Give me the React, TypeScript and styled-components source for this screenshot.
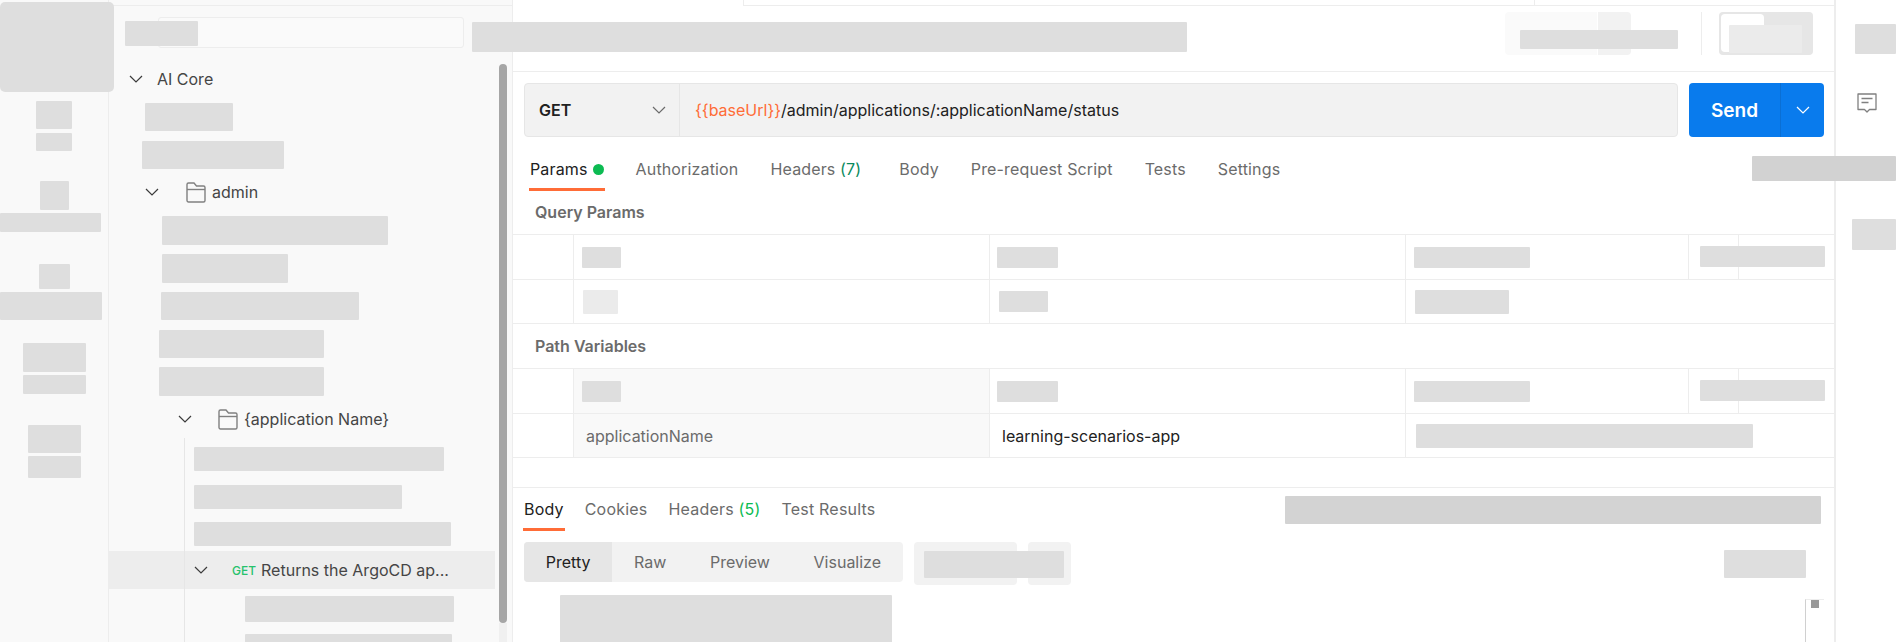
import React from 'react';
import styled, { createGlobalStyle } from 'styled-components';

const GlobalStyle = createGlobalStyle`
  html, body {
    margin: 0;
    padding: 0;
    background: #fff;
    overflow: hidden;
  }
  body {
    font-family: Inter, "Noto Sans", sans-serif;
  }
`;

const Shell = styled.div`
  position: relative;
  display: flex;
  width: 1896px;
  height: 642px;
  overflow: hidden;
  color: #454545;
`;

// covered-up bit of the screenshot
const Redact = styled.div<{ $w: number; $h: number; $c?: string; $mt?: number; $ml?: number; $mr?: number; $auto?: boolean; $start?: boolean }>`
  flex: none;
  width: ${(p) => p.$w}px;
  height: ${(p) => p.$h}px;
  margin-top: ${(p) => p.$mt ?? 0}px;
  margin-left: ${(p) => (p.$auto ? 'auto' : `${p.$ml ?? 0}px`)};
  margin-right: ${(p) => p.$mr ?? 0}px;
  align-self: ${(p) => (p.$start ? 'flex-start' : 'auto')};
  background: ${(p) => p.$c ?? '#dedede'};
  border-radius: 1px;
`;

const Overlay = styled(Redact)<{ $x: number; $y: number }>`
  position: absolute;
  z-index: 3;
  left: ${(p) => p.$x}px;
  top: ${(p) => p.$y}px;
  margin: 0;
`;

const NavRail = styled.nav`
  flex: none;
  width: 109px;
  height: 100%;
  box-sizing: border-box;
  background: #f9f9f9;
  border-right: 1px solid #ededed;
  display: flex;
  flex-direction: column;
  padding-top: 101px;
`;

const NavItem = styled.div<{ $gap: number; $mt: number }>`
  display: flex;
  flex-direction: column;
  align-items: center;
  gap: ${(p) => p.$gap}px;
  margin-top: ${(p) => p.$mt}px;
`;

const TopLeftBlock = styled(Overlay)`
  border-radius: 5px;
`;

const Sidebar = styled.aside`
  position: relative;
  flex: none;
  width: 404px;
  height: 100%;
  box-sizing: border-box;
  background: #f9f9f9;
  border-right: 1px solid #ededed;
`;

const SidebarTop = styled.div`
  height: 5px;
  border-bottom: 1px solid #ededed;
`;

const SearchRow = styled.div`
  display: flex;
  padding: 11px 0 0 49px;
`;

const SearchBox = styled.div`
  width: 306px;
  height: 31px;
  box-sizing: border-box;
  background: #fafafa;
  border: 1px solid #ededed;
  border-radius: 3px;
`;

const Tree = styled.div`
  position: relative;
  margin-top: 18px;
  display: flex;
  flex-direction: column;
`;

const TreeRow = styled.div<{ $pad: number; $mt: number; $h?: number; $active?: boolean }>`
  display: flex;
  align-items: center;
  flex: none;
  height: ${(p) => p.$h ?? 26}px;
  margin-top: ${(p) => p.$mt}px;
  margin-right: 17px;
  padding-left: ${(p) => p.$pad}px;
  background: ${(p) => (p.$active ? '#ededed' : 'transparent')};
  font-size: 16px;
  white-space: nowrap;
`;

const TreeLabel = styled.span<{ $ml: number }>`
  margin-left: ${(p) => p.$ml}px;
`;

const TreeIcon = styled.span<{ $ml: number }>`
  display: flex;
  margin-left: ${(p) => p.$ml}px;
`;

const MethodTag = styled.span`
  margin-left: 24px;
  margin-right: 5px;
  color: #27c26c;
  font-size: 12px;
  font-weight: 500;
`;

const GuideLine = styled.div`
  position: absolute;
  left: 75px;
  top: 372px;
  bottom: -200px;
  width: 1px;
  background: #e6e6e6;
`;

const ScrollThumb = styled.div`
  position: absolute;
  right: 5px;
  top: 64px;
  width: 8px;
  height: 559px;
  background: #a6a6a6;
  border-radius: 4px;
`;

const ScrollTrack = styled.div`
  position: absolute;
  right: 5px;
  top: 623px;
  width: 8px;
  height: 19px;
  background: #f0f0f0;
`;

const Main = styled.main`
  position: relative;
  flex: none;
  width: 1321px;
  height: 100%;
  background: #fff;
`;

const TabStrip = styled.div`
  display: flex;
  height: 5px;
  border-bottom: 1px solid #ededed;
`;

const OpenTab = styled.div`
  width: 230px;
  height: 6px;
  background: #fff;
  border-right: 1px solid #ededed;
`;

const ClosedTab = styled.div`
  width: 790px;
  border-right: 1px solid #ededed;
`;

const HeaderBar = styled.header`
  display: flex;
  align-items: center;
  height: 66px;
  padding: 0 21px 0 0;
  box-sizing: border-box;
  border-bottom: 1px solid #ededed;
`;

const SaveMain = styled.div`
  width: 92px;
  height: 43px;
  margin-left: auto;
  margin-top: -10px;
  background: #fafafa;
  border-radius: 4px 0 0 4px;
`;

const SaveCaret = styled.div`
  width: 33px;
  height: 43px;
  margin-left: 1px;
  margin-top: -10px;
  background: #f2f2f2;
  border-radius: 0 4px 4px 0;
`;

const HeaderDivider = styled.div`
  width: 1px;
  height: 43px;
  margin: -10px 17px 0 70px;
  background: #ededed;
`;

const ToggleTrack = styled.div`
  position: relative;
  width: 94px;
  height: 43px;
  margin-top: -10px;
  background: #e6e6e6;
  border-radius: 4px;
`;

const ToggleKnob = styled.div`
  position: absolute;
  left: 2px;
  top: 2px;
  width: 43px;
  height: 38px;
  background: #fff;
  border-radius: 4px;
`;

const UrlRow = styled.div`
  display: flex;
  gap: 11px;
  margin-top: 11px;
  padding: 0 10px 0 11px;
`;

const UrlBox = styled.div`
  display: flex;
  flex: 1;
  height: 54px;
  box-sizing: border-box;
  background: #f2f2f2;
  border: 1px solid #e6e6e6;
  border-radius: 4px;
  font-size: 16px;
`;

const MethodSelect = styled.div`
  display: flex;
  align-items: center;
  justify-content: space-between;
  width: 155px;
  padding: 0 13px 0 14px;
  box-sizing: border-box;
  border-right: 1px solid #e6e6e6;
  font-weight: 600;
  color: #212121;
  flex: none;
`;

const UrlInput = styled.div`
  display: flex;
  align-items: center;
  padding-left: 15px;
  color: #212121;
`;

const UrlVar = styled.span`
  color: #ff6c37;
`;

const SendButton = styled.div`
  display: flex;
  width: 135px;
  height: 54px;
  background: #097bed;
  border-radius: 4px;
  color: #fff;
  flex: none;
`;

const SendLabel = styled.div`
  display: flex;
  align-items: center;
  justify-content: center;
  width: 91px;
  font-size: 19px;
  font-weight: 600;
  border-right: 1px solid #0a6fd4;
`;

const SendCaret = styled.div`
  flex: 1;
  display: flex;
  align-items: center;
  justify-content: center;
`;

const TabRow = styled.div<{ $gap: number; $pad: number; $mt: number; $h: number; $track: number }>`
  position: relative;
  display: flex;
  gap: ${(p) => p.$gap}px;
  height: ${(p) => p.$h}px;
  margin-top: ${(p) => p.$mt}px;
  padding-left: ${(p) => p.$pad}px;
  box-sizing: border-box;
  font-size: 16px;
  letter-spacing: ${(p) => p.$track}px;
  color: #6b6b6b;
`;

const Tab = styled.div<{ $active?: boolean; $ml?: number }>`
  display: flex;
  align-items: center;
  gap: 5px;
  box-sizing: border-box;
  margin-left: ${(p) => p.$ml ?? 0}px;
  padding: 0 1px;
  white-space: nowrap;
  color: ${(p) => (p.$active ? '#212121' : '#6b6b6b')};
  border-bottom: 3px solid ${(p) => (p.$active ? '#ff6c37' : 'transparent')};
`;

const ResponseTab = styled(Tab)`
  padding-top: 2px;
`;

const Count = styled.span<{ $c: string }>`
  color: ${(p) => p.$c};
`;

const Dot = styled.span`
  width: 11px;
  height: 11px;
  border-radius: 50%;
  background: #0cbb52;
`;

const SectionTitle = styled.div<{ $h: number; $pb?: number }>`
  display: flex;
  align-items: center;
  height: ${(p) => p.$h}px;
  box-sizing: border-box;
  padding: 0 0 ${(p) => p.$pb ?? 0}px 22px;
  font-size: 16px;
  font-weight: 600;
  color: #6b6b6b;
`;

const ParamTable = styled.div`
  border-top: 1px solid #ededed;
`;

const ParamRow = styled.div<{ $h: number }>`
  display: grid;
  grid-template-columns: 60px 416px 416px 1fr;
  height: ${(p) => p.$h}px;
  box-sizing: border-box;
  border-bottom: 1px solid #ededed;
`;

const ParamCell = styled.div<{ $tint?: boolean }>`
  position: relative;
  display: flex;
  align-items: center;
  padding-left: 8px;
  border-left: 1px solid #ededed;
  background: ${(p) => (p.$tint ? '#f9f9f9' : 'transparent')};
  font-size: 16px;
  min-width: 0;
`;

const HandleCell = styled.div``;

const ColSplit = styled.div<{ $x: number }>`
  position: absolute;
  left: ${(p) => p.$x}px;
  top: 0;
  bottom: 0;
  width: 1px;
  background: #ededed;
`;

const KeyText = styled.span`
  margin-left: 4px;
  color: #6b6b6b;
`;

const ValueText = styled.span`
  margin-left: 4px;
  color: #212121;
`;

const Response = styled.section`
  margin-top: 29px;
  border-top: 1px solid #ededed;
`;

const ResponseBar = styled.div`
  display: flex;
  align-items: flex-start;
  height: 43px;
  margin-bottom: 11px;
`;

const ResponseTabs = styled(TabRow)`
  margin-top: 0;
  flex: none;
`;

const ViewBar = styled.div`
  display: flex;
  align-items: flex-start;
  gap: 11px;
  padding-left: 11px;
`;

const Segment = styled.div`
  display: flex;
  flex: none;
  width: 379px;
  height: 40px;
  background: #f2f2f2;
  border-radius: 4px;
  overflow: hidden;
  font-size: 16px;
  color: #6b6b6b;
`;

const SegmentItem = styled.div<{ $active?: boolean }>`
  display: flex;
  align-items: center;
  padding: 0 21.8px;
  background: ${(p) => (p.$active ? '#e6e6e6' : 'transparent')};
  color: ${(p) => (p.$active ? '#212121' : '#6b6b6b')};
`;

const ToolGroup = styled.div`
  position: relative;
  display: flex;
  gap: 11px;
`;

const ToolButton = styled.div<{ $w: number }>`
  width: ${(p) => p.$w}px;
  height: 43px;
  background: #f2f2f2;
  border-radius: 4px;
`;

const ToolCover = styled(Redact)`
  position: absolute;
  left: 10px;
  top: 9px;
  margin: 0;
`;

const BodyPreview = styled.div`
  margin: 10px 0 0 47px;
`;

const MiniTrack = styled.div`
  position: absolute;
  left: 1292px;
  top: 599px;
  width: 19px;
  height: 43px;
  box-sizing: border-box;
  border-left: 1px solid #d0d0d0;
  border-top: 1px solid #ededed;
`;

const MiniThumb = styled.div`
  width: 8px;
  height: 8px;
  margin-left: 5px;
  background: #999;
`;

const RightRail = styled.aside`
  flex: none;
  width: 61px;
  height: 100%;
  box-sizing: border-box;
  border-left: 2px solid #ededed;
  display: flex;
  flex-direction: column;
  align-items: flex-start;
  padding-top: 24px;
`;

const RailIcon = styled.div`
  margin: 39px 0 0 21px;
  height: 20px;
  line-height: 0;
`;

const Chevron = ({ size = 14, color = '#3b3b3b' }: { size?: number; color?: string }) => (
  <svg width={size} height={size} viewBox="0 0 14 14" fill="none" style={{ flex: 'none' }}>
    <path d="M1 4 L7 10 L13 4" stroke={color} strokeWidth="1.2" />
  </svg>
);

const FolderIcon = () => (
  <svg width="20" height="21" viewBox="0 0 20 21" fill="none" style={{ flex: 'none' }}>
    <path
      d="M1 18.5V2.500A1.500 1.500 0 0 1 2.500 1H8l2.500 3H17.500A1.500 1.500 0 0 1 19 5.500V18.500A1.500 1.500 0 0 1 17.500 20H2.500A1.500 1.500 0 0 1 1 18.500Z"
      stroke="#808080"
      strokeWidth="1.4"
    />
    <path d="M1 7.500H19" stroke="#808080" strokeWidth="1.4" />
  </svg>
);

const CommentIcon = () => (
  <svg width="20" height="20" viewBox="0 0 20 20" fill="none">
    <path
      d="M1 1H19V16.500H12.500L10 19L7.500 16.500H1Z"
      stroke="#808080"
      strokeWidth="1.300"
      strokeLinejoin="round"
    />
    <path d="M4.500 5.500H15.500M4.500 9.500H11.500" stroke="#808080" strokeWidth="1.300" />
  </svg>
);

const navItems = [
  { icon: [36, 28], label: [36, 18], gap: 4, mt: 0 },
  { icon: [29, 29], label: [101, 19], gap: 3, mt: 30, start: true },
  { icon: [31, 25], label: [102, 28], gap: 3, mt: 32, start: true },
  { icon: [63, 29], label: [63, 19], gap: 3, mt: 23 },
  { icon: [53, 28], label: [53, 22], gap: 3, mt: 31 },
];

export default function App() {
  return (
    <Shell>
      <GlobalStyle />
      <NavRail>
        {navItems.map((item, i) => (
          <NavItem key={i} $gap={item.gap} $mt={item.mt}>
            <Redact $w={item.icon[0]} $h={item.icon[1]} />
            <Redact $w={item.label[0]} $h={item.label[1]} $start={item.start} />
          </NavItem>
        ))}
      </NavRail>
      <TopLeftBlock $x={0} $y={2} $w={114} $h={90} />

      <Sidebar>
        <SidebarTop />
        <SearchRow>
          <SearchBox />
        </SearchRow>
        <Tree>
          <GuideLine />
          <TreeRow $pad={20} $mt={0}>
            <Chevron />
            <TreeLabel $ml={14}>AI Core</TreeLabel>
          </TreeRow>
          <TreeRow $pad={36} $mt={11} $h={28}>
            <Redact $w={88} $h={28} />
          </TreeRow>
          <TreeRow $pad={33} $mt={10} $h={28}>
            <Redact $w={142} $h={28} />
          </TreeRow>
          <TreeRow $pad={36} $mt={10}>
            <Chevron />
            <TreeIcon $ml={27}>
              <FolderIcon />
            </TreeIcon>
            <TreeLabel $ml={6}>admin</TreeLabel>
          </TreeRow>
          <TreeRow $pad={53} $mt={11} $h={29}>
            <Redact $w={226} $h={29} />
          </TreeRow>
          <TreeRow $pad={53} $mt={9} $h={29}>
            <Redact $w={126} $h={29} />
          </TreeRow>
          <TreeRow $pad={52} $mt={9} $h={28}>
            <Redact $w={198} $h={28} />
          </TreeRow>
          <TreeRow $pad={50} $mt={10} $h={28}>
            <Redact $w={165} $h={28} />
          </TreeRow>
          <TreeRow $pad={50} $mt={9} $h={29}>
            <Redact $w={165} $h={29} />
          </TreeRow>
          <TreeRow $pad={69} $mt={10}>
            <Chevron />
            <TreeIcon $ml={26}>
              <FolderIcon />
            </TreeIcon>
            <TreeLabel $ml={6}>{'{application Name}'}</TreeLabel>
          </TreeRow>
          <TreeRow $pad={85} $mt={15} $h={24}>
            <Redact $w={250} $h={24} />
          </TreeRow>
          <TreeRow $pad={85} $mt={14} $h={24}>
            <Redact $w={208} $h={24} />
          </TreeRow>
          <TreeRow $pad={85} $mt={13} $h={24}>
            <Redact $w={257} $h={24} />
          </TreeRow>
          <TreeRow $pad={85} $mt={5} $h={38} $active>
            <Chevron />
            <MethodTag>GET</MethodTag>
            <span>Returns the ArgoCD ap...</span>
          </TreeRow>
          <TreeRow $pad={136} $mt={7} $h={26}>
            <Redact $w={209} $h={26} />
          </TreeRow>
          <TreeRow $pad={136} $mt={12} $h={26}>
            <Redact $w={207} $h={26} />
          </TreeRow>
        </Tree>
        <ScrollThumb />
        <ScrollTrack />
      </Sidebar>
      <Overlay $x={125} $y={21} $w={73} $h={25} />
      <Overlay $x={472} $y={22} $w={715} $h={30} />

      <Main>
        <TabStrip>
          <OpenTab />
          <ClosedTab />
        </TabStrip>
        <HeaderBar>
          <SaveMain />
          <SaveCaret />
          <HeaderDivider />
          <ToggleTrack>
            <ToggleKnob />
          </ToggleTrack>
        </HeaderBar>
        <UrlRow>
          <UrlBox>
            <MethodSelect>
              GET
              <Chevron color="#6b6b6b" />
            </MethodSelect>
            <UrlInput>
              <UrlVar>{'{{baseUrl}}'}</UrlVar>/admin/applications/:applicationName/status
            </UrlInput>
          </UrlBox>
          <SendButton>
            <SendLabel>Send</SendLabel>
            <SendCaret>
              <Chevron color="#fff" />
            </SendCaret>
          </SendButton>
        </UrlRow>
        <TabRow $gap={30} $pad={16} $mt={13} $h={41} $track={0.15}>
          <Tab $active>
            Params
            <Dot />
          </Tab>
          <Tab>Authorization</Tab>
          <Tab>
            <span>
              Headers <Count $c="#0a8a5e">(7)</Count>
            </span>
          </Tab>
          <Tab $ml={6}>Body</Tab>
          <Tab>Pre-request Script</Tab>
          <Tab>Tests</Tab>
          <Tab>Settings</Tab>
        </TabRow>
        <SectionTitle $h={43} $pb={2}>
          Query Params
        </SectionTitle>
        <ParamTable>
          <ParamRow $h={45}>
            <HandleCell />
            <ParamCell>
              <Redact $w={39} $h={21} />
            </ParamCell>
            <ParamCell>
              <Redact $w={61} $h={21} $ml={-1} />
            </ParamCell>
            <ParamCell>
              <Redact $w={116} $h={21} />
              <ColSplit $x={282} />
              <ColSplit $x={332} />
            </ParamCell>
          </ParamRow>
          <ParamRow $h={44}>
            <HandleCell />
            <ParamCell>
              <Redact $w={35} $h={24} $c="#ebebeb" $ml={1} />
            </ParamCell>
            <ParamCell>
              <Redact $w={49} $h={21} $ml={1} />
            </ParamCell>
            <ParamCell>
              <Redact $w={94} $h={24} $ml={1} />
            </ParamCell>
          </ParamRow>
        </ParamTable>
        <SectionTitle $h={44}>Path Variables</SectionTitle>
        <ParamTable>
          <ParamRow $h={45}>
            <HandleCell />
            <ParamCell $tint>
              <Redact $w={39} $h={21} />
            </ParamCell>
            <ParamCell>
              <Redact $w={61} $h={21} $ml={-1} />
            </ParamCell>
            <ParamCell>
              <Redact $w={116} $h={21} />
              <ColSplit $x={282} />
              <ColSplit $x={332} />
            </ParamCell>
          </ParamRow>
          <ParamRow $h={44}>
            <HandleCell />
            <ParamCell $tint>
              <KeyText>applicationName</KeyText>
            </ParamCell>
            <ParamCell>
              <ValueText>learning-scenarios-app</ValueText>
            </ParamCell>
            <ParamCell>
              <Redact $w={337} $h={24} $ml={2} />
            </ParamCell>
          </ParamRow>
        </ParamTable>
        <Response>
          <ResponseBar>
            <ResponseTabs $gap={19} $pad={10} $mt={0} $h={43} $track={0.2}>
              <ResponseTab $active>Body</ResponseTab>
              <ResponseTab>Cookies</ResponseTab>
              <ResponseTab>
                <span>
                  Headers <Count $c="#0cbb52">(5)</Count>
                </span>
              </ResponseTab>
              <ResponseTab>Test Results</ResponseTab>
            </ResponseTabs>
            <Redact $w={536} $h={28} $c="#d3d3d3" $mt={8} $auto $mr={13} />
          </ResponseBar>
          <ViewBar>
            <Segment>
              <SegmentItem $active>Pretty</SegmentItem>
              <SegmentItem>Raw</SegmentItem>
              <SegmentItem>Preview</SegmentItem>
              <SegmentItem>Visualize</SegmentItem>
            </Segment>
            <ToolGroup>
              <ToolButton $w={103} />
              <ToolButton $w={43} />
              <ToolCover $w={140} $h={27} />
            </ToolGroup>
            <Redact $w={82} $h={28} $mt={8} $auto $mr={28} />
          </ViewBar>
          <BodyPreview>
            <Redact $w={332} $h={60} />
          </BodyPreview>
        </Response>
        <MiniTrack>
          <MiniThumb />
        </MiniTrack>
      </Main>

      <RightRail>
        <Redact $w={41} $h={30} $ml={19} />
        <RailIcon>
          <CommentIcon />
        </RailIcon>
        <Redact $w={44} $h={31} $mt={106} $ml={16} />
      </RightRail>

      <Overlay $x={1520} $y={30} $w={158} $h={19} />
      <Overlay $x={1729} $y={25} $w={73} $h={28} $c="#ebebeb" />
      <Overlay $x={1752} $y={156} $w={144} $h={25} $c="#d2d2d2" />
      <Overlay $x={1700} $y={246} $w={125} $h={21} />
      <Overlay $x={1700} $y={380} $w={125} $h={21} />
    </Shell>
  );
}
